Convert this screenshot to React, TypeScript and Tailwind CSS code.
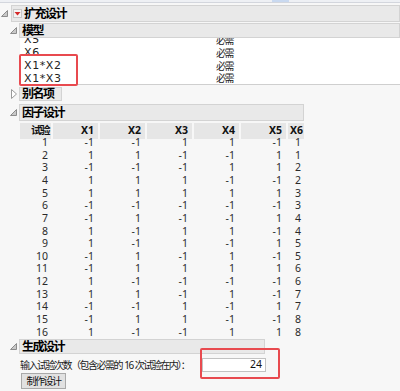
import React from "react";

const rows: number[][] = [
  [-1, -1, 1, 1, -1, 1],
  [1, 1, -1, -1, 1, 1],
  [-1, -1, -1, 1, 1, 2],
  [1, 1, 1, -1, -1, 2],
  [1, 1, 1, 1, 1, 3],
  [-1, -1, -1, -1, -1, 3],
  [-1, 1, -1, -1, 1, 4],
  [1, -1, 1, 1, -1, 4],
  [1, -1, 1, -1, 1, 5],
  [-1, 1, -1, 1, -1, 5],
  [-1, 1, 1, 1, 1, 6],
  [1, -1, -1, -1, -1, 6],
  [1, 1, -1, 1, -1, 7],
  [-1, -1, 1, -1, 1, 7],
  [-1, 1, 1, -1, -1, 8],
  [1, -1, -1, 1, 1, 8],
];

function OpenTri() {
  return (
    <svg width="7" height="7" viewBox="0 0 7 7">
      <polygon points="6.5,0.5 6.5,6.5 0.5,6.5" fill="#c8c8c8" stroke="#8c8c8c" strokeWidth="1" />
    </svg>
  );
}

function ClosedTri() {
  return (
    <svg width="6" height="10" viewBox="0 0 6 10">
      <polygon points="0.5,0.5 5.5,5 0.5,9.5" fill="#ffffff" stroke="#9a9a9a" strokeWidth="1" />
    </svg>
  );
}

function RedMenu() {
  return (
    <svg width="9" height="9" viewBox="0 0 9 9">
      <rect x="0.5" y="0.5" width="8" height="8" fill="#f4f4f4" stroke="#c9c9c9" />
      <polygon points="1.5,3 7.5,3 4.5,6.5" fill="#d42a2a" />
    </svg>
  );
}

const cjk = "font-['Noto_Sans','Noto_Sans_CJK_SC',sans-serif]";
const head = "font-bold text-[12px] tracking-[-1.5px] text-black";
const body = "text-[10px] tracking-[-1.5px] text-[#1a1a1a]";

const cols = ["X1", "X2", "X3", "X4", "X5", "X6"];
const grid = "grid grid-cols-[31px_45px_45px_45px_45px_45px_16px] gap-x-[2px]";

export default function App() {
  return (
    <div className={`w-[400px] h-[391px] bg-[#f7f7f7] relative overflow-hidden ${cjk}`}>
      {/* top strip */}
      <div className="h-[3px] bg-[#eef0f4] border-b border-[#d3d6dd] relative">
        <div className="absolute left-[272px] top-0 w-[17px] h-[2px] bg-[#c9d9f0]" />
      </div>

      {/* 扩充设计 */}
      <div className="mt-[2px] flex items-center h-[17px]">
        <div className="w-[11px] pl-[1px] flex items-center"><OpenTri /></div>
        <div className="flex-1 h-full bg-[#e9e9e9] border border-[#d3d3d3] flex items-center pl-[1px] gap-[2px]">
          <RedMenu />
          <span className={head}>扩充设计</span>
        </div>
      </div>

      {/* 模型 */}
      <div className="mt-[1px] flex items-center h-[15px]">
        <div className="w-[19px] pl-[10px] flex items-center"><OpenTri /></div>
        <div className="flex-1 h-full bg-[#e9e9e9] border border-[#d3d3d3] flex items-center pl-[2px]">
          <span className={head}>模型</span>
        </div>
      </div>

      {/* model list */}
      <div className="ml-[20px] h-[47px] bg-white border-b border-[#cfcfcf] overflow-hidden">
        <div className="-mt-[4px]">
          {["X5", "X6", "X1*X2", "X1*X3"].map((t) => (
            <div key={t} className="h-[12.8px] flex items-center">
              <span className="w-[196px] pl-[4px] text-[11px] tracking-[0.6px] text-[#222] font-['DejaVu_Sans',sans-serif]">{t}</span>
              <span className={body}>必需</span>
            </div>
          ))}
        </div>
      </div>

      {/* 别名项 */}
      <div className="mt-[2px] flex items-center h-[14px]">
        <div className="w-[19px] pl-[11px] flex items-center"><ClosedTri /></div>
        <div className="w-[43px] h-full bg-[#e9e9e9] border border-[#d3d3d3] flex items-center pl-[2px]">
          <span className={head}>别名项</span>
        </div>
      </div>

      {/* 因子设计 */}
      <div className="mt-[3px] flex items-center h-[17px]">
        <div className="w-[19px] pl-[10px] flex items-center"><OpenTri /></div>
        <div className="w-[285px] h-full bg-[#e9e9e9] border border-[#d3d3d3] flex items-center pl-[2px]">
          <span className={head}>因子设计</span>
        </div>
      </div>

      {/* table */}
      <div className="ml-[20px] mt-[2px]">
        <div className={`${grid} h-[13px]`}>
          <div className="bg-[#e6e6e6] flex items-center justify-end pr-[2px]">
            <span className="font-bold text-[10.5px] tracking-[-1.5px] text-[#111]">试验</span>
          </div>
          {cols.map((c, i) => (
            <div key={c} className={`bg-[#e6e6e6] flex items-center justify-end ${i === 5 ? "pr-[1px]" : "pr-[4px]"}`}>
              <span className="font-bold text-[10.5px] text-[#111]">{c}</span>
            </div>
          ))}
        </div>
        {rows.map((r, ri) => (
          <div key={ri} className={`${grid} h-[12.65px] text-[10.5px] text-[#2a2a2a] leading-none`}>
            <div className="flex items-center justify-end pr-[3px]">{ri + 1}</div>
            {r.map((v, ci) => (
              <div key={ci} className={`flex items-center justify-end ${ci === 5 ? "pr-[3px]" : "pr-[4px]"}`}>
                {v}
              </div>
            ))}
          </div>
        ))}
      </div>

      {/* 生成设计 */}
      <div className="mt-[1px] flex items-center h-[15px]">
        <div className="w-[19px] pl-[10px] flex items-center"><OpenTri /></div>
        <div className="w-[246px] h-full bg-[#e9e9e9] border border-[#d3d3d3] flex items-center pl-[2px]">
          <span className={head}>生成设计</span>
        </div>
      </div>

      {/* input row */}
      <div className="mt-[4px] ml-[20px] flex items-center h-[14px]">
        <span className={`${body} w-[182px] whitespace-nowrap`}>输入试验次数（包含必需的&nbsp;&nbsp;16&nbsp;&nbsp;次试验在内）：</span>
        <div className="w-[64px] h-[14px] bg-white border border-[#c2c2c2] flex items-center justify-end pr-[3px]">
          <span className="text-[10.5px] text-[#111]">24</span>
        </div>
      </div>

      {/* button */}
      <div className="ml-[21px] mt-[1px]">
        <button className="w-[45px] h-[16px] bg-[#e1e1e1] border border-[#a9a9a9] flex items-center justify-center">
          <span className={`${body} text-[#111]`}>制作设计</span>
        </button>
      </div>

      {/* red highlight boxes */}
      <div className="absolute left-[19px] top-[54px] w-[59px] h-[32px] border-2 border-[#e84a4f] rounded-[2px]" />
      <div className="absolute left-[200px] top-[348px] w-[80px] h-[31px] border-2 border-[#e84a4f] rounded-[2px]" />
    </div>
  );
}
